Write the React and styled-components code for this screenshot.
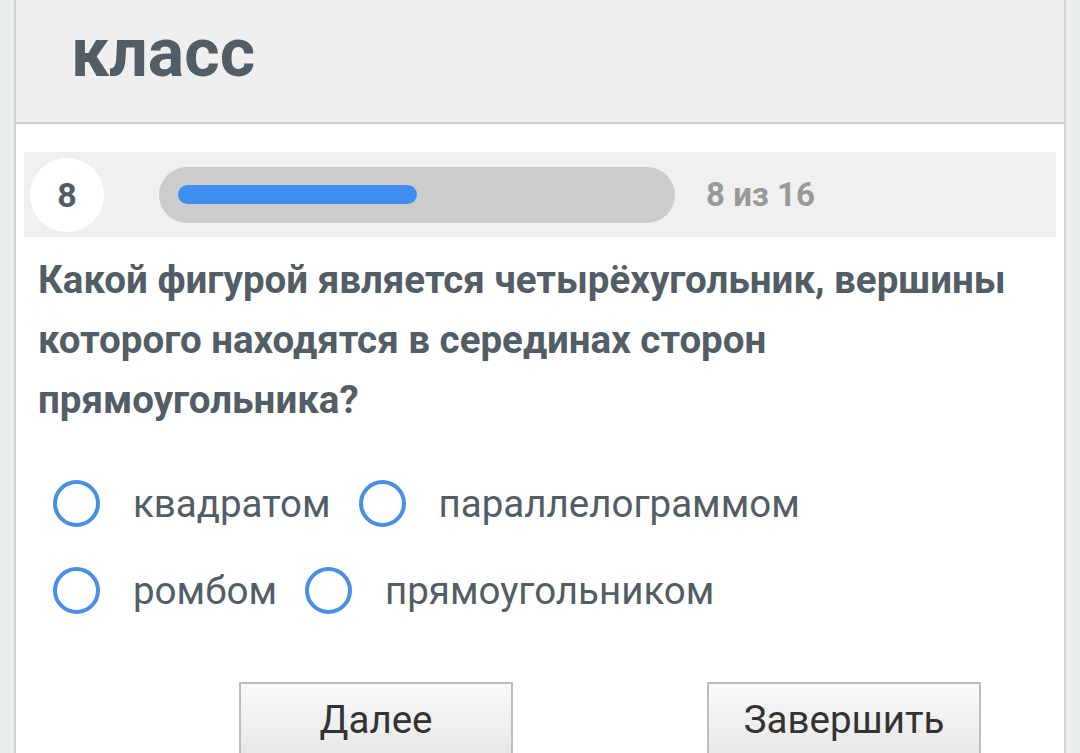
import React from 'react';
import styled, { createGlobalStyle } from 'styled-components';

const GlobalStyle = createGlobalStyle`
  html, body {
    margin: 0;
    padding: 0;
    background: #eaedee;
    font-family: Roboto, 'Noto Sans', sans-serif;
    overflow: hidden;
  }
`;

const Page = styled.div`
  margin-left: 14px;
  width: 1048px;
  min-height: 753px;
  background: #ffffff;
  border-left: 2px solid #cfcfcf;
  border-right: 2px solid #d6d6d6;
`;

const Header = styled.header`
  height: 124px;
  box-sizing: border-box;
  background: #efefef;
  border-bottom: 2px solid #cccccc;
  padding: 19px 0 0 55px;
`;

const Title = styled.h1`
  margin: 0;
  font-size: 68px;
  line-height: 68px;
  font-weight: 700;
  color: #525d65;
`;

const Body = styled.main`
  padding: 28px 8px 0 8px;
`;

const ProgressBand = styled.div`
  display: flex;
  align-items: center;
  height: 85px;
  padding-left: 6px;
  background: #f0f0f0;
`;

const Number = styled.div`
  width: 74px;
  height: 74px;
  border-radius: 50%;
  background: #ffffff;
  display: flex;
  align-items: center;
  justify-content: center;
  font-size: 34px;
  font-weight: 700;
  color: #525d65;
`;

const Track = styled.div`
  margin-left: 55px;
  width: 516px;
  height: 56px;
  border-radius: 28px;
  background: #cccccc;
  display: flex;
  align-items: center;
  padding-left: 19px;
  box-sizing: border-box;
`;

const Fill = styled.div`
  height: 19px;
  border-radius: 10px;
  background: #408ff0;
`;

const Counter = styled.span`
  margin-left: 31px;
  font-size: 33px;
  font-weight: 700;
  color: #999999;
`;

const Question = styled.p`
  margin: 13px 0 0 14px;
  font-size: 38.5px;
  line-height: 60px;
  font-weight: 700;
  color: #525d65;
`;

const Options = styled.div`
  display: flex;
  flex-direction: column;
  gap: 40px;
  margin: 50px 0 0 29px;
`;

const OptionRow = styled.div`
  display: flex;
  align-items: center;
  gap: 28px;
`;

const Option = styled.label`
  display: flex;
  align-items: center;
  gap: 33px;
  font-size: 38.5px;
  color: #525d65;
  cursor: pointer;
`;

const Radio = styled.span`
  width: 47px;
  height: 47px;
  box-sizing: border-box;
  border-radius: 50%;
  border: 4px solid #4a8fe2;
  background: #ffffff;
`;

const Actions = styled.div`
  display: flex;
  gap: 194px;
  margin: 68px 0 0 215px;
`;

const Button = styled.button`
  width: 274px;
  height: 90px;
  padding: 13px 0 0 0;
  display: flex;
  justify-content: center;
  align-items: flex-start;
  border: 2px solid #bdbdbd;
  background: linear-gradient(#f9f9f9, #e4e4e4);
  font-family: Roboto, 'Noto Sans', sans-serif;
  font-size: 38.5px;
  line-height: 46px;
  color: #333333;
`;

const rows = [
  ['квадратом', 'параллелограммом'],
  ['ромбом', 'прямоугольником'],
];

export default function App() {
  const current = 8;
  const total = 16;
  return (
    <>
      <GlobalStyle />
      <Page>
        <Header>
          <Title>класс</Title>
        </Header>
        <Body>
          <ProgressBand>
            <Number>{current}</Number>
            <Track>
              <Fill style={{ width: `${(current / total) * 478}px` }} />
            </Track>
            <Counter>{current} из {total}</Counter>
          </ProgressBand>
          <Question>
            Какой фигурой является четырёхугольник, вершины которого находятся в серединах сторон прямоугольника?
          </Question>
          <Options>
            {rows.map((row, i) => (
              <OptionRow key={i}>
                {row.map((label) => (
                  <Option key={label}>
                    <Radio />
                    {label}
                  </Option>
                ))}
              </OptionRow>
            ))}
          </Options>
          <Actions>
            <Button>Далее</Button>
            <Button>Завершить</Button>
          </Actions>
        </Body>
      </Page>
    </>
  );
}
